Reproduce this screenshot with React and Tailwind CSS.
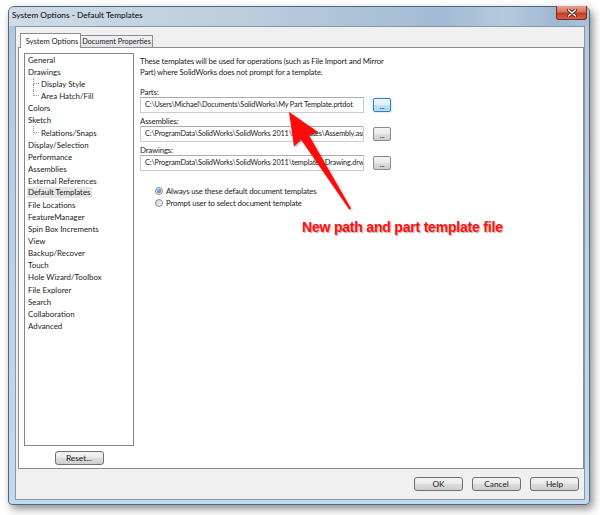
import React from "react";

const treeItems = [
  { label: "General" },
  { label: "Drawings" },
  { label: "Display Style", child: true },
  { label: "Area Hatch/Fill", child: true, last: true },
  { label: "Colors" },
  { label: "Sketch" },
  { label: "Relations/Snaps", child: true, last: true },
  { label: "Display/Selection" },
  { label: "Performance" },
  { label: "Assemblies" },
  { label: "External References" },
  { label: "Default Templates", selected: true },
  { label: "File Locations" },
  { label: "FeatureManager" },
  { label: "Spin Box Increments" },
  { label: "View" },
  { label: "Backup/Recover" },
  { label: "Touch" },
  { label: "Hole Wizard/Toolbox" },
  { label: "File Explorer" },
  { label: "Search" },
  { label: "Collaboration" },
  { label: "Advanced" },
];

const templates = [
  { label: "Parts:", path: "C:\\Users\\Michael\\Documents\\SolidWorks\\My Part Template.prtdot", hot: true },
  { label: "Assemblies:", path: "C:\\ProgramData\\SolidWorks\\SolidWorks 2011\\templates\\Assembly.asmdot" },
  { label: "Drawings:", path: "C:\\ProgramData\\SolidWorks\\SolidWorks 2011\\templates\\Drawing.drwdot" },
];

function TreeRow({ item }) {
  return (
    <div className="flex h-[12.08px] items-center pl-[3px]">
      {item.child && (
        <div className="ml-[5px] mr-[2px] flex h-full w-[6px] flex-col">
          <div className="h-1/2 border-b border-l border-dotted border-[#9a9a9a]" />
          {!item.last && <div className="flex-1 border-l border-dotted border-[#9a9a9a]" />}
        </div>
      )}
      <span
        className={
          item.selected
            ? "-ml-[1px] bg-[#e6e6e6] px-[1px] leading-[11px]"
            : "leading-[12px]"
        }
      >
        {item.label}
      </span>
    </div>
  );
}

function PushButton({ children, className = "" }) {
  return (
    <div
      className={
        "flex items-center justify-center rounded-[3px] border border-[#707070] bg-[linear-gradient(#f3f3f3_0%,#ececec_45%,#dddddd_50%,#cfcfcf_100%)] leading-[12px] text-[#1b1b1b] " +
        className
      }
    >
      {children}
    </div>
  );
}

function Radio({ checked, label }) {
  return (
    <div className="flex h-[12px] items-center pl-[15px]">
      <div className="flex h-[8px] w-[8px] items-center justify-center rounded-full border border-[#8a8c8e] bg-[linear-gradient(135deg,#d4d4d4,#f7f7f7)]">
        {checked && (
          <div className="h-[4px] w-[4px] rounded-full bg-[radial-gradient(circle_at_35%_35%,#8cc1f0,#1f5fae)]" />
        )}
      </div>
      <span className="ml-[3px] leading-[12px]">{label}</span>
    </div>
  );
}

export default function App() {
  return (
    <div className="relative h-[515px] w-[600px] overflow-hidden bg-white font-['Lato',sans-serif] text-[8.3px] text-[#1b1b1b]">
      <div className="pl-[8px] pt-[6px]">
        {/* window frame */}
        <div className="flex h-[499px] w-[582px] flex-col rounded-b-[4px] rounded-t-[6px] border border-[#56667a] bg-[linear-gradient(#b3c8dd,#c3d9ef)] shadow-[3px_4px_9px_rgba(0,0,0,0.45)]">
          {/* title bar */}
          <div className="flex h-[19px] items-start justify-between rounded-t-[5px] bg-[linear-gradient(90deg,#cfdbe7_0%,#bccdde_40%,#a3bbd4_75%,#b6cadf_86%,#9fb8d2_94%,#a9c1d9_100%)] pl-[3px] pr-[2px]">
            <span className="mt-[3px] leading-[11px] text-black">System Options - Default Templates</span>
            <div className="-mt-[1px] flex h-[14px] w-[31px] items-center justify-center rounded-b-[3px] border border-t-0 border-[#7b2b22] bg-[linear-gradient(#eaa192_0%,#d8735f_45%,#c23b28_55%,#d2604a_100%)]">
              <svg width="10" height="8" viewBox="0 0 10 8">
                <path d="M1.5 1 L8.5 7 M8.5 1 L1.5 7" stroke="#4d1911" strokeWidth="3.2" strokeLinecap="round" fill="none" />
                <path d="M1.5 1 L8.5 7 M8.5 1 L1.5 7" stroke="#ffffff" strokeWidth="1.6" strokeLinecap="round" fill="none" />
              </svg>
            </div>
          </div>

          {/* client area */}
          <div className="mb-[4px] ml-[6px] mr-[4px] flex flex-1 flex-col border border-[#8797ab] bg-[#f0f0f0]">
            {/* tabs */}
            <div className="flex h-[20px] items-end whitespace-nowrap pl-[4px] text-[7.6px]">
              <div className="relative z-10 -mb-[1px] flex h-[15px] w-[61px] items-center justify-center border border-b-0 border-[#898c95] bg-white pl-[3px] leading-[12px]">
                System Options
              </div>
              <div className="flex h-[12px] w-[72px] items-center justify-center border border-b-0 border-l-0 border-[#898c95] bg-[linear-gradient(#f3f3f3,#e3e3e3)] text-[7.3px] leading-[11px]">
                Document Properties
              </div>
            </div>

            {/* tab page */}
            <div className="relative z-0 ml-[2px] flex h-[422px] border border-[#898c95] bg-white">
              {/* category tree */}
              <div className="flex flex-col pl-[5px] pt-[5px]">
                <div className="h-[393px] w-[110px] border border-[#828790] bg-white text-[7.9px]">
                  {treeItems.map((item) => (
                    <TreeRow key={item.label} item={item} />
                  ))}
                </div>
                <PushButton className="mt-[5px] h-[14px] w-[49px] self-center">Reset...</PushButton>
              </div>

              {/* template paths */}
              <div className="ml-[6px] flex flex-col pt-[8px] text-[7.8px] tracking-[-0.15px]">
                <p className="leading-[11px]">
                  These templates will be used for operations (such as File Import and Mirror
                  <br />
                  Part) where SolidWorks does not prompt for a template.
                </p>
                <div className="mt-[9px] flex flex-col">
                  {templates.map((t, i) => (
                    <div key={t.label} className={i > 0 ? "mt-[3px]" : ""}>
                      <div className="h-[10px] leading-[10px]">{t.label}</div>
                      <div className="flex items-center">
                        <div className="h-[16px] w-[224px] overflow-hidden whitespace-nowrap border border-[#c9ccd3] border-t-[#abadb3] bg-white pl-[4px] text-[7.3px] leading-[14px] tracking-[-0.15px]">
                          {t.path}
                        </div>
                        <div
                          className={
                            "ml-[9px] flex h-[14px] w-[18px] items-end justify-center rounded-[2px] border pb-[1px] leading-[8px] " +
                            (t.hot
                              ? "border-[#3c7fb1] bg-[linear-gradient(#ecf8fe_0%,#dcf1fc_45%,#bde4f8_55%,#a7d9f5_100%)] shadow-[0_0_2px_rgba(60,160,230,0.6)]"
                              : "border-[#8a8a8a] bg-[linear-gradient(#f3f3f3_0%,#ececec_45%,#dddddd_55%,#cfcfcf_100%)]")
                          }
                        >
                          ...
                        </div>
                      </div>
                    </div>
                  ))}
                </div>
                <div className="mt-[14px] flex flex-col">
                  <Radio checked label="Always use these default document templates" />
                  <Radio label="Prompt user to select document template" />
                </div>
              </div>
            </div>

            {/* dialog buttons */}
            <div className="flex justify-end gap-[9px] pr-[5px] pt-[8px]">
              <PushButton className="h-[14px] w-[49px]">OK</PushButton>
              <PushButton className="h-[14px] w-[49px]">Cancel</PushButton>
              <PushButton className="h-[14px] w-[49px]">Help</PushButton>
            </div>
          </div>
        </div>
      </div>

      {/* callout arrow */}
      <svg
        className="pointer-events-none absolute left-0 top-0 drop-shadow-[1px_1px_1px_rgba(0,0,0,0.35)]"
        width="600"
        height="515"
        viewBox="0 0 600 515"
      >
        <polygon
          points="289,112 318,132 308.7,134.9 351,208.5 349.3,209.5 301.1,139.7 294,146.5"
          fill="#ff0a0a"
        />
      </svg>
      <div className="pointer-events-none absolute left-[302px] top-[219px] whitespace-nowrap font-['Liberation_Sans',Arial,sans-serif] text-[14px] font-bold leading-[16px] tracking-[-0.2px] text-[#ff1010] [text-shadow:1px_1px_1px_rgba(90,0,0,0.35)]">
        New path and part template file
      </div>
    </div>
  );
}
